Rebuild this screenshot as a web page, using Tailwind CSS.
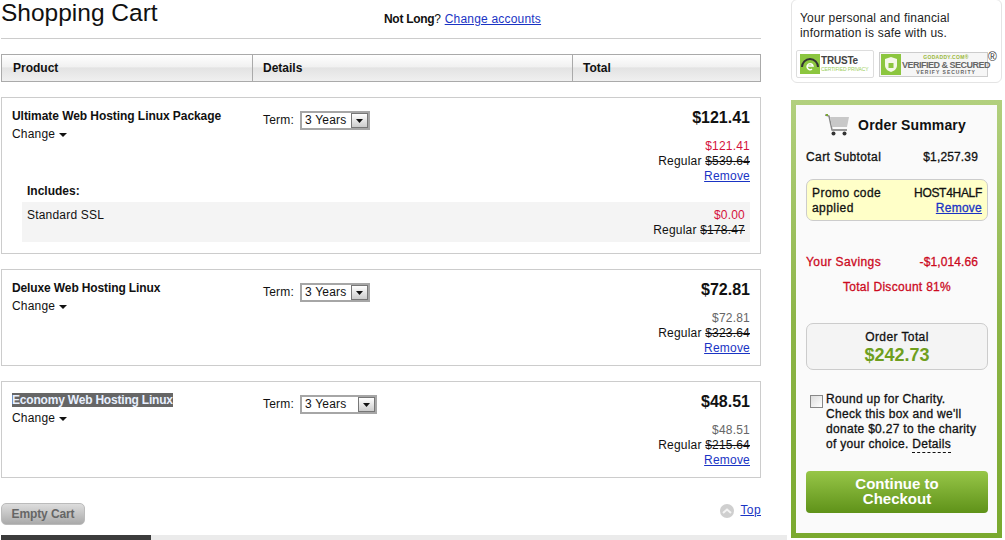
<!DOCTYPE html>
<html><head><meta charset="utf-8"><script src="https://cdn.jsdelivr.net/npm/@tailwindcss/browser@4"></script></head>
<body class="bg-white">
<div class="w-[1005px] h-[540px] overflow-hidden flex font-['Liberation_Sans',Arial,sans-serif] text-[12px] leading-[15px] tracking-[0.2px] text-[#111]">
  <!-- main column -->
  <div class="w-[787px] pl-px flex flex-col shrink-0">
    <div class="w-[760px] h-[39px] border-b border-[#ccc] flex">
      <h1 class="w-[383px] text-[24.5px] leading-[26px] tracking-normal text-[#111] font-normal">Shopping Cart</h1>
      <div class="pt-[12px] leading-[14px]"><b class="tracking-[-0.3px]">Not Long</b>? <a class="text-[#1a34c4] underline">Change accounts</a></div>
    </div>
    <div class="mt-[15px] w-[760px] h-[28px] border border-[#aaa] flex font-bold tracking-normal bg-[linear-gradient(#fff,#f1f1f1_45%,#e3e3e3_50%,#f0f0f0)]">
      <div class="w-[251px] border-r border-[#aaa] pl-[11px] pt-[6px]">Product</div>
      <div class="w-[320px] border-r border-[#aaa] pl-[10px] pt-[6px]">Details</div>
      <div class="pl-[10px] pt-[6px]">Total</div>
    </div>

    <div class="mt-[15px] w-[760px] h-[157px] border border-[#ccc] relative">
      <div class="flex h-[86px]">
        <div class="w-[251px] pl-[10px] pt-[11px]">
          <div class="font-bold tracking-[-0.06px]">Ultimate Web Hosting Linux Package</div>
          <div class="mt-[3px] flex items-center gap-[4px]">Change <svg width="8" height="4" viewBox="0 0 8 4"><path d="M0 0h8L4 4z" fill="#111"/></svg></div>
        </div>
        <div class="w-[200px] pl-[10px] pt-[13px] flex items-start gap-[6px]"><span class="pt-[2px]">Term:</span>
          <div class="w-[70px] h-[19px] border-2 border-[#a6a6a6] flex justify-between pl-[3px]"><span>3 Years</span><span class="w-[17px] h-[15px] border border-[#777] bg-[linear-gradient(#fff,#ccc)] flex items-center justify-center"><svg width="7" height="4" viewBox="0 0 7 4"><path d="M0 0h7L3.500 4z" fill="#111"/></svg></span></div>
        </div>
        <div class="flex-1 pr-[10px] pt-[10px] text-right">
          <div class="text-[16px] leading-[20px] tracking-normal font-bold">$121.41</div>
          <div class="mt-[11px] text-[#d4123c]">$121.41</div>
          <div>Regular <s>$539.64</s></div>
          <a class="text-[#1a34c4] underline">Remove</a>
        </div>
      </div>
      <div class="pl-[25px] font-bold tracking-normal h-[14px]">Includes:</div>
      <div class="ml-[20px] mr-[10px] mt-[4px] h-[40px] bg-[#f4f4f4] flex justify-between pl-[5px] pr-[5px] pt-[6px]">
        <span>Standard SSL</span>
        <div class="text-right"><div class="text-[#d4123c]">$0.00</div><div>Regular <s>$178.47</s></div></div>
      </div>
    </div>

    <div class="mt-[15px] w-[760px] h-[97px] border border-[#ccc] flex">
      <div class="w-[251px] pl-[10px] pt-[11px]">
        <div class="font-bold tracking-[-0.12px]">Deluxe Web Hosting Linux</div>
        <div class="mt-[3px] flex items-center gap-[4px]">Change <svg width="8" height="4" viewBox="0 0 8 4"><path d="M0 0h8L4 4z" fill="#111"/></svg></div>
      </div>
      <div class="w-[200px] pl-[10px] pt-[13px] flex items-start gap-[6px]"><span class="pt-[2px]">Term:</span>
        <div class="w-[70px] h-[19px] border-2 border-[#a6a6a6] flex justify-between pl-[3px]"><span>3 Years</span><span class="w-[17px] h-[15px] border border-[#777] bg-[linear-gradient(#fff,#ccc)] flex items-center justify-center"><svg width="7" height="4" viewBox="0 0 7 4"><path d="M0 0h7L3.500 4z" fill="#111"/></svg></span></div>
      </div>
      <div class="flex-1 pr-[10px] pt-[10px] text-right">
        <div class="text-[16px] leading-[20px] tracking-normal font-bold">$72.81</div>
        <div class="mt-[11px] text-[#666]">$72.81</div>
        <div>Regular <s>$323.64</s></div>
        <a class="text-[#1a34c4] underline">Remove</a>
      </div>
    </div>

    <div class="mt-[15px] w-[760px] h-[97px] border border-[#ccc] flex">
      <div class="w-[251px] pl-[10px] pt-[11px]">
        <div class="font-bold tracking-[-0.2px]"><span class="bg-[#666] text-[#e8f0ff]">Economy Web Hosting Linux</span></div>
        <div class="mt-[3px] flex items-center gap-[4px]">Change <svg width="8" height="4" viewBox="0 0 8 4"><path d="M0 0h8L4 4z" fill="#111"/></svg></div>
      </div>
      <div class="w-[200px] pl-[10px] pt-[13px] flex items-start gap-[6px]"><span class="pt-[2px]">Term:</span>
        <div class="w-[77px] h-[19px] border-2 border-[#a6a6a6] flex justify-between pl-[3px]"><span>3 Years</span><span class="w-[17px] h-[15px] border border-[#777] bg-[linear-gradient(#fff,#ccc)] flex items-center justify-center"><svg width="7" height="4" viewBox="0 0 7 4"><path d="M0 0h7L3.500 4z" fill="#111"/></svg></span></div>
      </div>
      <div class="flex-1 pr-[10px] pt-[10px] text-right">
        <div class="text-[16px] leading-[20px] tracking-normal font-bold">$48.51</div>
        <div class="mt-[11px] text-[#666]">$48.51</div>
        <div>Regular <s>$215.64</s></div>
        <a class="text-[#1a34c4] underline">Remove</a>
      </div>
    </div>

    <div class="mt-[25px] w-[760px] h-[22px] flex justify-between items-start">
      <button class="w-[84px] h-[22px] rounded-[5px] border border-[#bbb] bg-[linear-gradient(#ddd,#aaa)] font-bold tracking-[-0.1px] text-[#666]">Empty Cart</button>
      <div class="flex items-center gap-[6px] mt-[0px]"><svg width="14" height="14" viewBox="0 0 14 14"><circle cx="7" cy="7" r="7" fill="#cfcfcf"/><path d="M3 9l4-3.500 4 3.500" stroke="#f4f4f4" stroke-width="2" fill="none"/></svg><a class="text-[#1a34c4] underline tracking-[0.4px]">Top</a></div>
    </div>
    <div class="mt-[10px] w-[786px] h-[5px] bg-[#ebebeb]"><div class="w-[150px] h-[5px] bg-[#3c3c3c]"></div></div>
  </div>

  <!-- sidebar -->
  <div class="ml-[4px] w-[211px] shrink-0">
    <div class="w-[211px] h-[84px] mt-[-1px] border border-[#e4e4e4] rounded-[6px] pt-[11px] pl-[8px] relative">
      <div class="leading-[15px] text-[#222]">Your personal and financial<br>information is safe with us.</div>
      <div class="flex items-start mt-[9px] ml-[-4px] gap-[5px] tracking-normal">
        <div class="w-[78px] h-[28px] border border-[#ddd] rounded-[2px] flex items-center pl-[3px] gap-[1px]">
          <svg width="20" height="20" viewBox="0 0 20 20"><rect width="20" height="20" fill="#8cc63f"/><path d="M2 13a8 8 0 0 1 16 0" stroke="#333" stroke-width="2" fill="none"/><path d="M7 12h6a3 3 0 1 0-1 3" stroke="#fff" stroke-width="1.500" fill="none"/></svg>
          <div><div class="text-[10px] font-bold leading-[10px] text-[#444] tracking-[-0.2px]">TRUSTe</div><div class="text-[5px] leading-[6px] tracking-[-0.1px] whitespace-nowrap text-[#9bce5a]">CERTIFIED PRIVACY</div></div>
        </div>
        <div class="w-[109px] h-[25px] mt-[2px] border border-[#ccc] flex items-center pl-[1px] gap-[1px] bg-[#f6f6f6]">
          <svg width="20" height="21" viewBox="0 0 20 21" class="shrink-0"><rect width="20" height="21" fill="#8cc63f"/><path d="M10 3l6 2v6c0 4-3 6-6 7-3-1-6-3-6-7V5z" fill="#f4f8e8"/><rect x="7.500" y="9" width="5" height="5" fill="#8cc63f"/></svg>
          <div class="text-center flex-1 text-[#666] font-bold whitespace-nowrap"><div class="text-[5px] leading-[6px] tracking-[0.3px] text-[#9ab83a]">GODADDY.COM®</div><div class="text-[9px] leading-[10px] tracking-[-0.5px]">VERIFIED &amp; SECURED</div><div class="text-[5px] leading-[5px] tracking-[1px]">VERIFY SECURITY</div></div>
        </div>
        <span class="text-[12px] leading-[12px] mt-[1px] ml-[-5px] text-[#333]">®</span>
      </div>
    </div>

    <div class="mt-[17px] w-[211px] h-[438px] p-[5px] bg-[linear-gradient(#b2d07e,#8db548_50%,#7aa92e)]">
      <div class="w-full h-full bg-[#fafafa] pl-[10px] pr-[9px]">
        <div class="h-[46px] flex items-center justify-center gap-[8px] pb-[6px] pr-[3px]">
          <svg width="25" height="22" viewBox="0 0 25 22"><path d="M0 1l4 1 3 14h14" stroke="#888" stroke-width="1.500" fill="none"/><path d="M1 1h2" stroke="#7aa92e" stroke-width="2"/><path d="M5 3h19l-2 10H7z" fill="#c8c8c8"/><path d="M7 15h15v2H7z" fill="#999"/><circle cx="8.500" cy="19.500" r="2" fill="#333"/><circle cx="19.500" cy="19.500" r="2" fill="#333"/></svg>
          <span class="font-bold text-[14px] tracking-[0.15px]">Order Summary</span>
        </div>
        <div class="flex justify-between tracking-[0.4px] [-webkit-text-stroke:0.3px] pr-[10px] h-[15px] mt-[-1px]"><span>Cart Subtotal</span><span class="tracking-[0.15px]">$1,257.39</span></div>
        <div class="mt-[14px] h-[42px] rounded-[7px] border border-[#ccc] bg-[#ffffc8] flex justify-between pl-[5px] pr-[5px] pt-[6px] [-webkit-text-stroke:0.3px]"><span class="tracking-[0.45px]">Promo code<br>applied</span><span class="text-right tracking-[-0.3px]">HOST4HALF<br><a class="text-[#1a34c4] underline tracking-[0.25px]">Remove</a></span></div>
        <div class="mt-[34px] flex justify-between tracking-[0.4px] [-webkit-text-stroke:0.3px] text-[#cc0a1e] pr-[10px]"><span>Your Savings</span><span class="tracking-[0.1px]">-$1,014.66</span></div>
        <div class="mt-[10px] text-center tracking-[0.3px] [-webkit-text-stroke:0.3px] text-[#cc0a1e]">Total Discount 81%</div>
        <div class="mt-[28px] h-[47px] rounded-[7px] border border-[#ccc] bg-[#f4f4f4] text-center pt-[6px]"><div class="tracking-[0.4px] [-webkit-text-stroke:0.3px]">Order Total</div><div class="text-[#6f9f1e] font-bold tracking-normal text-[18px] leading-[19px] mt-[1px]">$242.73</div></div>
        <div class="mt-[22px] flex pl-[4px] gap-[3px]">
          <span class="w-[13px] h-[13px] mt-[3px] border border-[#888] bg-[linear-gradient(135deg,#ddd,#fff)] shrink-0"></span>
          <div class="tracking-[0.3px] [-webkit-text-stroke:0.3px] leading-[15px] text-[#111]">Round up for Charity.<br>Check this box and we'll<br>donate $0.27 to the charity<br>of your choice. <span class="border-b border-dashed border-[#111] pb-px">Details</span></div>
        </div>
        <div class="mt-[19px] h-[42px] rounded-[4px] bg-[linear-gradient(#97c648,#5f9219)] text-white font-bold tracking-normal text-center text-[15px] leading-[15px] pt-[5px]">Continue to<br>Checkout</div>
      </div>
    </div>
  </div>
</div>
</body></html>
